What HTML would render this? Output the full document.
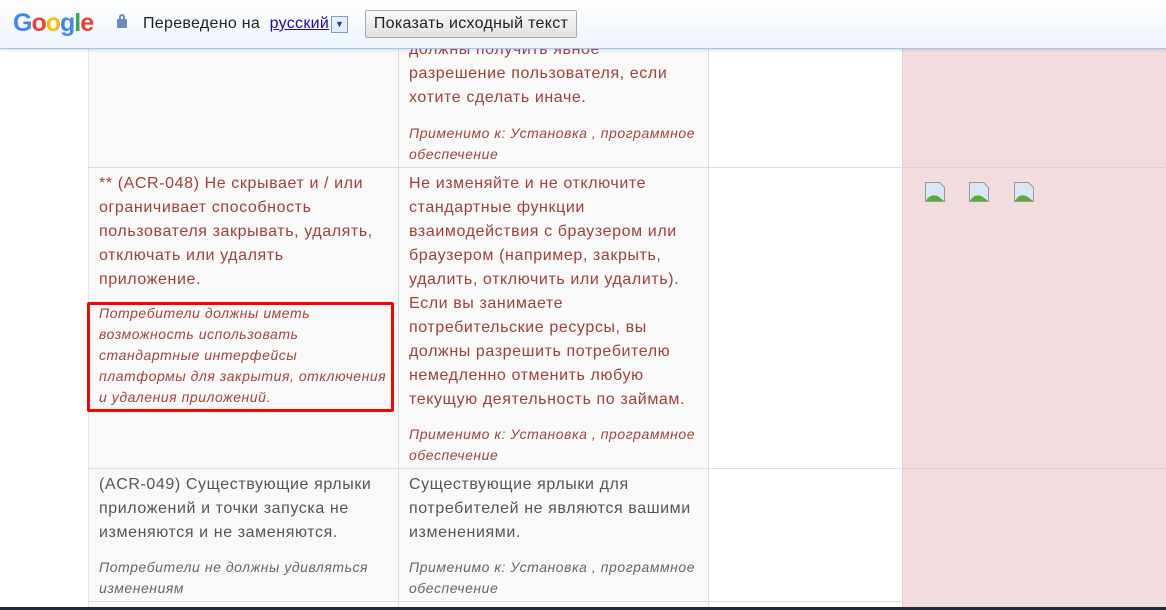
<!DOCTYPE html>
<html><head><meta charset="utf-8"><style>
*{margin:0;padding:0;box-sizing:border-box}
body{width:1166px;height:610px;overflow:hidden;background:#fff;font-family:"Liberation Sans","DejaVu Sans",sans-serif;position:relative}
.col{position:absolute;top:0;height:610px}
.t{position:absolute;font-size:16px;line-height:24px;white-space:nowrap;letter-spacing:0.6px}
.i{position:absolute;font-size:14px;line-height:21px;font-style:italic;white-space:nowrap;letter-spacing:0.55px}
.r{color:#a23f3a}.g{color:#555}.ri{color:#a4443e}.gi{color:#666}
.h{position:absolute;left:88px;width:814px;height:1px;background:#ddd}
</style></head><body>
<div class="col" style="left:88px;width:310px;background:#f9f9f9;border-left:1px solid #e4e4e4"></div>
<div class="col" style="left:398px;width:310px;background:#f9f9f9;border-left:1px solid #ddd"></div>
<div class="col" style="left:708px;width:194px;background:#fff;border-left:1px solid #ddd"></div>
<div class="col" style="left:902px;width:264px;background:#f2dcdd;border-left:1px solid #e8cccc"></div>
<div class="h" style="top:167px"></div>
<div class="h" style="top:468px"></div>
<div class="h" style="top:601px"></div>
<div style="position:absolute;left:902px;width:264px;top:167px;height:1px;background:#e8d0d0"></div>
<div style="position:absolute;left:902px;width:264px;top:468px;height:1px;background:#e8d0d0"></div>

<div class="t r" style="left:409px;top:38px">должны получить явное<br>разрешение пользователя, если<br>хотите сделать иначе.</div>
<div class="i ri" style="left:409px;top:123px">Применимо к: Установка , программное<br>обеспечение</div>

<div class="t r" style="left:99px;top:172px">** (ACR-048) Не скрывает и / или<br>ограничивает способность<br>пользователя закрывать, удалять,<br>отключать или удалять<br>приложение.</div>
<div class="i ri" style="left:99px;top:303px">Потребители должны иметь<br>возможность использовать<br>стандартные интерфейсы<br>платформы для закрытия, отключения<br>и удаления приложений.</div>
<div style="position:absolute;left:87px;top:302px;width:307px;height:110px;border:3px solid #f00;border-radius:2px"></div>
<div class="t r" style="left:409px;top:172px">Не изменяйте и не отключите<br>стандартные функции<br>взаимодействия с браузером или<br>браузером (например, закрыть,<br>удалить, отключить или удалить).<br>Если вы занимаете<br>потребительские ресурсы, вы<br>должны разрешить потребителю<br>немедленно отменить любую<br>текущую деятельность по займам.</div>
<div class="i ri" style="left:409px;top:424px">Применимо к: Установка , программное<br>обеспечение</div>

<div class="t g" style="left:99px;top:473px">(ACR-049) Существующие ярлыки<br>приложений и точки запуска не<br>изменяются и не заменяются.</div>
<div class="i gi" style="left:99px;top:557px">Потребители не должны удивляться<br>изменениям</div>
<div class="t g" style="left:409px;top:473px">Существующие ярлыки для<br>потребителей не являются вашими<br>изменениями.</div>
<div class="i gi" style="left:409px;top:557px">Применимо к: Установка , программное<br>обеспечение</div>

<svg style="position:absolute;left:925px;top:182px" width="120" height="22">
<g id="ic"><path d="M0.5 0.5h14l5 5v14h-19z" fill="#d8e6f8" stroke="#999"/><path d="M1 19c3-6 8-7 13-4l5 4z" fill="#5aac3a"/></g>
<use href="#ic" x="44"/><use href="#ic" x="89"/>
</svg>

<div style="position:absolute;left:0;top:0;width:1166px;height:49px;background:linear-gradient(#fff,#eef4fd);border-bottom:1px solid #a9c4ea;box-shadow:0 1px 3px rgba(100,140,200,.3)"></div>
<div style="position:absolute;left:13px;top:9px;font-size:25px;font-weight:bold;letter-spacing:-1px;font-family:'Liberation Sans',sans-serif"><span style="color:#4285f4">G</span><span style="color:#ea4335">o</span><span style="color:#fbbc05">o</span><span style="color:#4285f4">g</span><span style="color:#34a853">l</span><span style="color:#ea4335">e</span></div>
<div style="position:absolute;left:117px;top:19px;width:10px;height:9px;background:#6c8cbf;border-radius:1px"></div>
<div style="position:absolute;left:119px;top:14px;width:6px;height:7px;border:2px solid #6c8cbf;border-bottom:none;border-radius:3px 3px 0 0"></div>
<div style="position:absolute;left:143px;top:15px;font-size:16px;color:#222;letter-spacing:0.3px">Переведено на&nbsp; <span style="color:#1a0dab;text-decoration:underline">русский</span></div>
<div style="position:absolute;left:331px;top:16px;width:17px;height:17px;border:1px solid #7a9bd0;background:#e4eefc;color:#1a3c8a;font-size:9px;text-align:center;line-height:15px">▼</div>
<div style="position:absolute;left:365px;top:10px;width:212px;height:28px;border:1px solid #aaa;border-radius:2px;background:linear-gradient(#f8f8f8,#e2e2e2);font-size:16px;color:#222;text-align:center;line-height:26px;letter-spacing:0.3px">Показать исходный текст</div>
<div style="position:absolute;left:0;top:607px;width:1166px;height:3px;background:#1e2a3a"></div>
</body></html>
